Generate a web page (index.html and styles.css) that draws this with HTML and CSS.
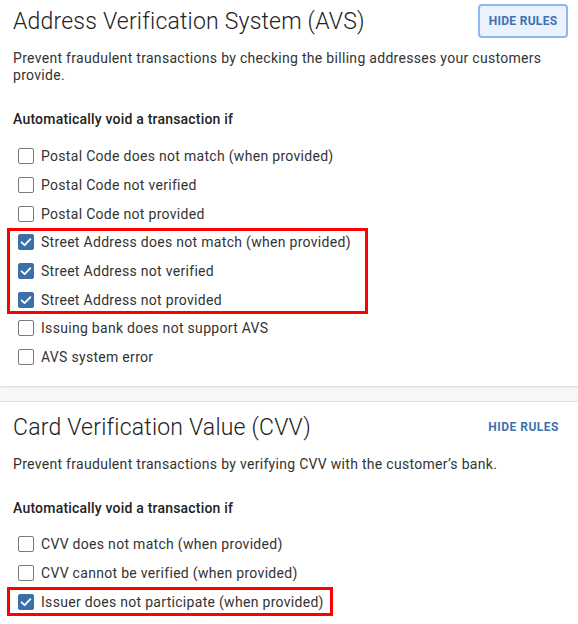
FILE: index.html
```html
<!DOCTYPE html>
<html>
<head>
<meta charset="utf-8">
<link rel="stylesheet" href="styles.css">
</head>
<body>
<section class="panel panel--first">
  <div class="panel-head">
    <h2 class="panel-title">Address Verification System (AVS)</h2>
    <button class="btn-rules btn-rules--boxed">HIDE RULES</button>
  </div>
  <p class="panel-desc">Prevent fraudulent transactions by checking the billing addresses your customers provide.</p>
  <h3 class="rules-title">Automatically void a transaction if</h3>
  <div class="rules">
    <label class="rule"><span class="box"></span><span class="rule-text">Postal Code does not match (when provided)</span></label>
    <label class="rule"><span class="box"></span><span class="rule-text">Postal Code not verified</span></label>
    <label class="rule"><span class="box"></span><span class="rule-text">Postal Code not provided</span></label>
    <div class="highlight highlight--avs">
      <label class="rule"><span class="box box--on"><svg viewBox="0 0 16 16" class="tick"><path d="M3.6 8.3 L6.6 11.2 L12.4 5.2"/></svg></span><span class="rule-text">Street Address does not match (when provided)</span></label>
      <label class="rule"><span class="box box--on"><svg viewBox="0 0 16 16" class="tick"><path d="M3.6 8.3 L6.6 11.2 L12.4 5.2"/></svg></span><span class="rule-text">Street Address not verified</span></label>
      <label class="rule"><span class="box box--on"><svg viewBox="0 0 16 16" class="tick"><path d="M3.6 8.3 L6.6 11.2 L12.4 5.2"/></svg></span><span class="rule-text">Street Address not provided</span></label>
    </div>
    <label class="rule"><span class="box"></span><span class="rule-text">Issuing bank does not support AVS</span></label>
    <label class="rule"><span class="box"></span><span class="rule-text">AVS system error</span></label>
  </div>
</section>
<div class="gap-band"></div>
<section class="panel panel--second">
  <div class="panel-head">
    <h2 class="panel-title">Card Verification Value (CVV)</h2>
    <button class="btn-rules">HIDE RULES</button>
  </div>
  <p class="panel-desc">Prevent fraudulent transactions by verifying CVV with the customer’s bank.</p>
  <h3 class="rules-title">Automatically void a transaction if</h3>
  <div class="rules">
    <label class="rule"><span class="box"></span><span class="rule-text">CVV does not match (when provided)</span></label>
    <label class="rule"><span class="box"></span><span class="rule-text">CVV cannot be verified (when provided)</span></label>
    <div class="highlight highlight--cvv">
      <label class="rule"><span class="box box--on"><svg viewBox="0 0 16 16" class="tick"><path d="M3.6 8.3 L6.6 11.2 L12.4 5.2"/></svg></span><span class="rule-text">Issuer does not participate (when provided)</span></label>
    </div>
  </div>
</section>
</body>
</html>
```

FILE: styles.css
```css
* { box-sizing: border-box; }
html, body { margin: 0; padding: 0; }
body {
  background: #f7f7f7;
  font-family: Roboto, "Liberation Sans", Arial, sans-serif;
  color: #333;
  width: 578px;
  height: 624px;
  overflow: hidden;
}
.panel {
  background: #fff;
  padding: 0 10px 0 13px;
}
.panel--first {
  height: 386px;
  padding-top: 2px;
  box-shadow: 0 1px 2px rgba(0,0,0,0.12);
  position: relative;
}
.gap-band {
  height: 16px;
  border-bottom: 1px solid #dedede;
}
.panel--second {
  height: 222px;
  padding-top: 6px;
}
.panel-head {
  display: flex;
  align-items: center;
  justify-content: space-between;
  height: 38px;
}
.panel-title {
  margin: 0;
  font-weight: 300;
  font-size: 23px;
  color: #222;
  letter-spacing: 0.2px;
}
.btn-rules {
  font-family: Roboto, "Liberation Sans", Arial, sans-serif;
  font-weight: 700;
  font-size: 12px;
  color: #3f72ad;
  background: none;
  border: 0;
  padding: 0;
  margin-right: 9px;
  letter-spacing: 0.5px;
}
.btn-rules--boxed {
  background: #e9f2fd;
  border: 2px solid #8db8ec;
  border-radius: 4px;
  width: 90px;
  height: 34px;
  margin-right: 0;
  margin-top: 0;
  letter-spacing: 0.3px;
}
.panel-desc {
  margin: 10px 0 0;
  font-size: 14px;
  line-height: 17px;
  color: #333;
  max-width: 548px;
  letter-spacing: 0.3px;
}
.panel--second .panel-desc { margin-top: 10px; }
.rules-title {
  margin: 27px 0 0;
  font-size: 14px;
  font-weight: 500;
  color: #222;
  letter-spacing: 0.2px;
}
.panel--second .rules-title { margin-top: 27px; }
.rules {
  margin-top: 15px;
}
.panel--second .rules { margin-top: 14px; }
.rule {
  display: flex;
  align-items: center;
  height: 28.7px;
  font-size: 14px;
  color: #333;
  padding-left: 5px;
  letter-spacing: 0.3px;
}
.box {
  width: 16px;
  height: 16px;
  border: 1.5px solid #7a7a7a;
  border-radius: 2px;
  margin-right: 7px;
  flex: none;
  display: flex;
  align-items: center;
  justify-content: center;
  background: #fff;
}
.box--on {
  background: #3a6fa9;
  border-color: #3a6fa9;
}
.tick {
  width: 16px;
  height: 16px;
  flex: none;
}
.tick path {
  fill: none;
  stroke: #fff;
  stroke-width: 1.8;
  stroke-linecap: round;
  stroke-linejoin: round;
}
.highlight {
  outline: 3px solid #f00;
  outline-offset: -3px;
  margin-left: -6px;
  padding-left: 6px;
}
.highlight--avs { width: 361px; }
.highlight--cvv { width: 326px; }
```
